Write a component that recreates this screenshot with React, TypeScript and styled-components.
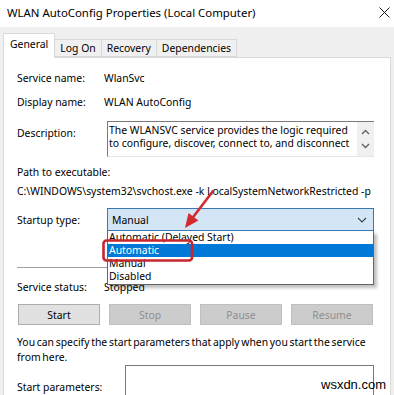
import React from 'react';
import styled, {createGlobalStyle} from 'styled-components';

const GlobalStyle = createGlobalStyle`
  html, body {
    margin: 0;
    padding: 0;
    background: #ffffff;
  }
  body {
    font-family: "Noto Sans", "Liberation Sans", sans-serif;
    font-size: 10.4px;
    color: #000000;
  }
  * {
    box-sizing: border-box;
  }
`;

const tabs = [
  {name: 'General', active: true},
  {name: 'Log On', active: false},
  {name: 'Recovery', active: false},
  {name: 'Dependencies', active: false},
];

const options = ['Automatic (Delayed Start)', 'Automatic', 'Manual', 'Disabled'];

const buttons = [
  {name: 'Start', disabled: false},
  {name: 'Stop', disabled: true},
  {name: 'Pause', disabled: true},
  {name: 'Resume', disabled: true},
];

const App = () => {
  return (
    <>
      <GlobalStyle />
      <Window>
        <TitleBar>
          <Title>WLAN AutoConfig Properties (Local Computer)</Title>
          <CloseIcon width="11" height="11" viewBox="0 0 11 11">
            <path d="M0.5 0.5 L10.5 10.5 M10.5 0.5 L0.5 10.5" stroke="#1a1a1a" strokeWidth="1" />
          </CloseIcon>
        </TitleBar>

        <TabStrip>
          {tabs.map(tab => (
            <Tab key={tab.name} $active={tab.active}>
              {tab.name}
            </Tab>
          ))}
        </TabStrip>

        <Panel>
          <Row $mt={0}>
            <Label>Service name:</Label>
            <Value>WlanSvc</Value>
          </Row>
          <Row $mt={8}>
            <Label>Display name:</Label>
            <Value>WLAN AutoConfig</Value>
          </Row>
          <Row $mt={11} $top>
            <Label $offset={4}>Description:</Label>
            <DescBox>
              <DescText>
                The WLANSVC service provides the logic required
                <br />
                to configure, discover, connect to, and disconnect
              </DescText>
              <ScrollStrip>
                <svg width="9" height="6" viewBox="0 0 9 6">
                  <path d="M1 5 L4.5 1.5 L8 5" fill="none" stroke="#606060" strokeWidth="1.3" />
                </svg>
                <svg width="9" height="6" viewBox="0 0 9 6">
                  <path d="M1 1 L4.5 4.5 L8 1" fill="none" stroke="#606060" strokeWidth="1.3" />
                </svg>
              </ScrollStrip>
            </DescBox>
          </Row>

          <Line $mt={7}>Path to executable:</Line>
          <Line $mt={3}>C:\WINDOWS\system32\svchost.exe -k LocalSystemNetworkRestricted -p</Line>

          <Row $mt={9}>
            <Label>Startup type:</Label>
            <ComboWrap>
              <Combo>
                <span>Manual</span>
                <svg width="10" height="6" viewBox="0 0 10 6">
                  <path d="M1 1 L5 5 L9 1" fill="none" stroke="#404040" strokeWidth="1.1" />
                </svg>
              </Combo>
              <OptionList>
                {options.map(opt => (
                  <Option key={opt} $selected={opt === 'Automatic'}>
                    {opt}
                  </Option>
                ))}
              </OptionList>
            </ComboWrap>
          </Row>

          <Separator />

          <Row $mt={11}>
            <Label>Service status:</Label>
            <Value>Stopped</Value>
          </Row>

          <ButtonRow>
            {buttons.map(btn => (
              <ServiceButton key={btn.name} disabled={btn.disabled}>
                {btn.name}
              </ServiceButton>
            ))}
          </ButtonRow>

          <HelpText>
            You can specify the start parameters that apply when you start the service
            <br />
            from here.
          </HelpText>

          <Row $mt={0} $top>
            <ParamLabel>Start parameters:</ParamLabel>
            <ParamInput />
          </Row>
        </Panel>

        <Annotation width="394" height="395" viewBox="0 0 394 395">
          <rect x="103.5" y="240.5" width="88.5" height="20" rx="3" fill="none" stroke="#c8262d" strokeWidth="2.6" />
          <path d="M213 191 L193.4 216.8" stroke="#d12a2f" strokeWidth="2.6" strokeLinecap="round" />
          <polygon points="185,228 198.4,220.6 188.5,213" fill="#d12a2f" />
        </Annotation>

        <Watermark>wsxdn.com</Watermark>
      </Window>
    </>
  );
};

const Window = styled.div`
  position: relative;
  width: 394px;
  height: 395px;
  overflow: hidden;
  background: #f0f0f0;
  display: flex;
  flex-direction: column;
`;

const TitleBar = styled.div`
  height: 27px;
  flex-shrink: 0;
  background: #ffffff;
  display: flex;
  align-items: center;
  justify-content: space-between;
  padding: 0 3px 3px 7px;
`;

const Title = styled.div`
  font-size: 11.4px;
  color: #000000;
`;

const CloseIcon = styled.svg`
  display: block;
  margin-right: 1px;
`;

const TabStrip = styled.div`
  height: 30px;
  flex-shrink: 0;
  display: flex;
  align-items: flex-end;
  padding-left: 3px;
`;

const Tab = styled.div<{$active: boolean}>`
  position: relative;
  z-index: ${({$active}) => ($active ? 2 : 1)};
  height: ${({$active}) => ($active ? '25px' : '18px')};
  margin-bottom: ${({$active}) => ($active ? '-1px' : '0')};
  margin-left: ${({$active}) => ($active ? '0' : '-1px')};
  padding: ${({$active}) => ($active ? '0 6px 5px' : '0 5px 1px')};
  display: flex;
  align-items: center;
  background: ${({$active}) => ($active ? '#ffffff' : '#f0f0f0')};
  border: 1px solid #d9d9d9;
  border-bottom: ${({$active}) => ($active ? 'none' : '1px solid #d9d9d9')};
  white-space: nowrap;
  &:first-child {
    margin-left: 0;
  }
`;

const Panel = styled.div`
  flex: 1;
  margin: 0 3px;
  background: #ffffff;
  border: 1px solid #d9d9d9;
  border-bottom: none;
  padding: 12px 16px 0 13px;
  display: flex;
  flex-direction: column;
`;

const Row = styled.div<{$mt: number; $top?: boolean}>`
  display: flex;
  align-items: ${({$top}) => ($top ? 'flex-start' : 'center')};
  margin-top: ${({$mt}) => $mt}px;
  line-height: 16px;
`;

const Label = styled.div<{$offset?: number}>`
  width: 87px;
  flex-shrink: 0;
  margin-top: ${({$offset}) => $offset || 0}px;
  white-space: nowrap;
`;

const Value = styled.div`
  white-space: nowrap;
`;

const DescBox = styled.div`
  margin-left: 3px;
  width: 267px;
  height: 36px;
  display: flex;
  border-top: 1px solid #7a7a7a;
  border-left: 1px solid #7a7a7a;
  border-bottom: 1px solid #e6e6e6;
`;

const DescText = styled.div`
  flex: 1;
  padding: 2px 0 0 1px;
  line-height: 13px;
  white-space: nowrap;
  overflow: hidden;
`;

const ScrollStrip = styled.div`
  width: 17px;
  flex-shrink: 0;
  background: #f0f0f0;
  display: flex;
  flex-direction: column;
  align-items: center;
  justify-content: space-between;
  padding: 7px 0 7px;
  svg {
    display: block;
  }
`;

const Line = styled.div<{$mt: number}>`
  margin-top: ${({$mt}) => $mt}px;
  line-height: 16px;
  white-space: nowrap;
`;

const ComboWrap = styled.div`
  position: relative;
  margin-left: 3px;
  width: 267px;
`;

const Combo = styled.div`
  height: 23px;
  display: flex;
  align-items: center;
  justify-content: space-between;
  padding: 0 6px 0 4px;
  background: #d4e6f6;
  border: 1px solid #3a78b5;
  svg {
    display: block;
  }
`;

const OptionList = styled.div`
  position: absolute;
  z-index: 5;
  top: 100%;
  left: 0;
  width: 100%;
  background: #ffffff;
  border: 1px solid #646464;
  border-top: none;
  box-shadow: 3px 3px 3px rgba(0, 0, 0, 0.25);
  padding-bottom: 1px;
`;

const Option = styled.div<{$selected: boolean}>`
  height: 13px;
  line-height: 13px;
  padding-left: 1px;
  background: ${({$selected}) => ($selected ? '#0078d7' : 'transparent')};
  color: ${({$selected}) => ($selected ? '#ffffff' : '#000000')};
  white-space: nowrap;
`;

const Separator = styled.div`
  margin-top: 36px;
  height: 1px;
  width: 357px;
  background: #a0a0a0;
`;

const ButtonRow = styled.div`
  margin-top: 9px;
  display: grid;
  grid-template-columns: repeat(4, 82px);
  justify-content: space-between;
  width: 355px;
  margin-left: 1px;
`;

const ServiceButton = styled.button`
  height: 21px;
  padding: 0;
  font-family: inherit;
  font-size: 10.4px;
  background: ${({disabled}) => (disabled ? '#cccccc' : '#e1e1e1')};
  border: 1px solid ${({disabled}) => (disabled ? '#bfbfbf' : '#adadad')};
  color: ${({disabled}) => (disabled ? '#8f8f8f' : '#000000')};
`;

const HelpText = styled.div`
  margin-top: 10px;
  line-height: 15px;
  word-spacing: -1px;
  white-space: nowrap;
`;

const ParamLabel = styled.div`
  width: 108px;
  flex-shrink: 0;
  margin-top: 14px;
  white-space: nowrap;
`;

const ParamInput = styled.div`
  margin-top: 0;
  width: 249px;
  height: 40px;
  border: 1px solid #7a7a7a;
  background: #ffffff;
`;

const Annotation = styled.svg`
  position: absolute;
  top: 0;
  left: 0;
  z-index: 10;
  pointer-events: none;
`;

const Watermark = styled.div`
  position: absolute;
  z-index: 11;
  left: 321px;
  top: 377px;
  font-family: "Liberation Sans", Arial, sans-serif;
  font-size: 13px;
  line-height: 16px;
  color: #000000;
`;

export default App;
